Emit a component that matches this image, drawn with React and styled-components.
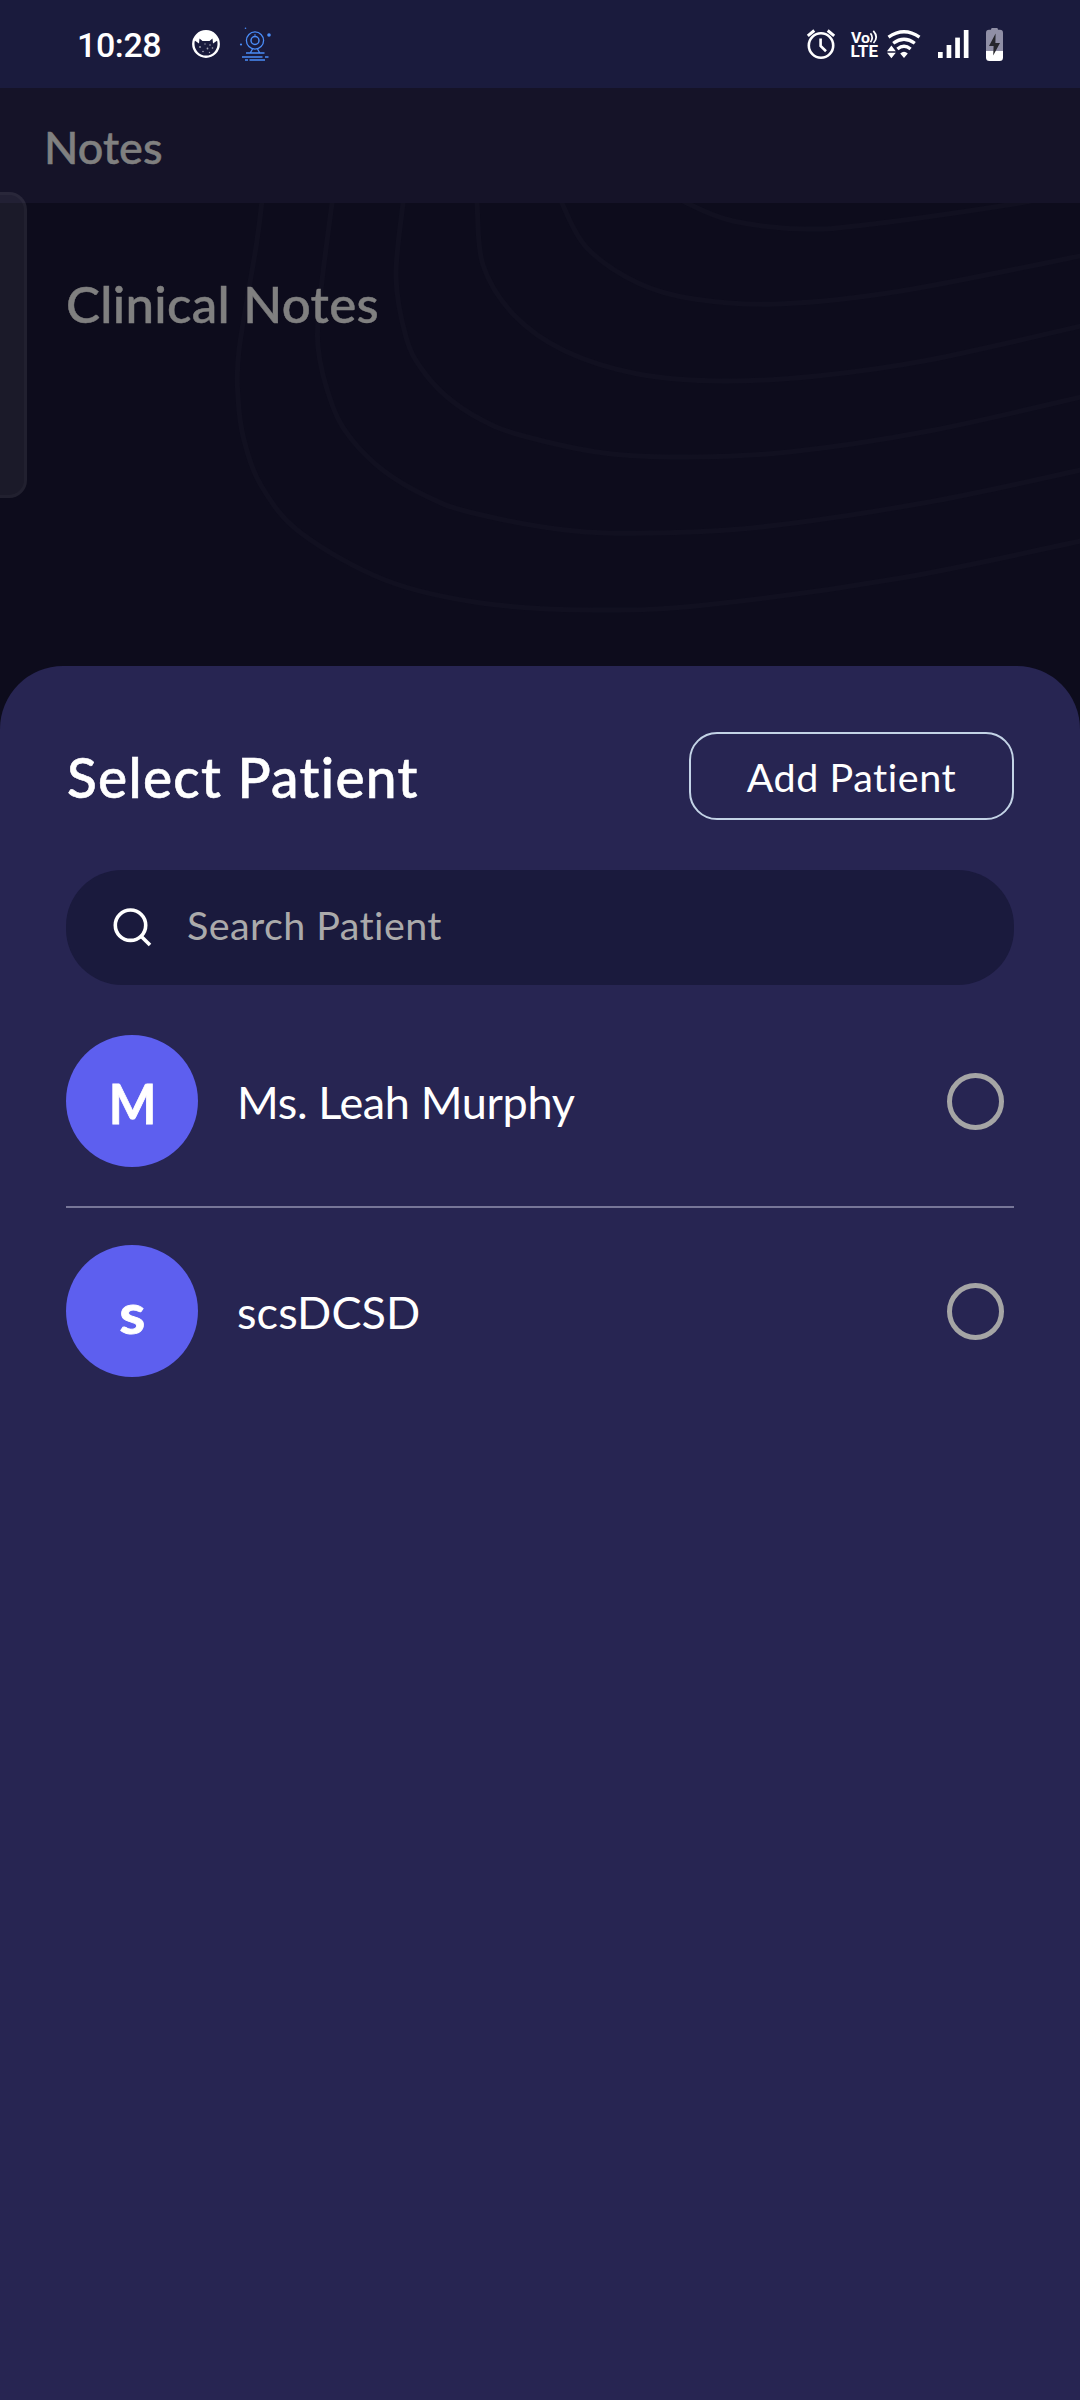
import React from 'react';
import styled, { createGlobalStyle } from 'styled-components';

const Global = createGlobalStyle`
  * { box-sizing: border-box; }
  body { margin: 0; background: #0d0c1c; }
`;

const Screen = styled.div`
  display: flex;
  flex-direction: column;
  position: relative;
  width: 1080px;
  height: 2400px;
  overflow: hidden;
  background: #0d0c1c;
  color: #fff;
  font-family: Lato, 'Open Sans', sans-serif;
`;

const StatusBar = styled.header`
  display: flex;
  justify-content: space-between;
  align-items: center;
  height: 88px;
  flex: none;
  padding: 0 77px;
  background: #1a1b3d;
`;

const StatusGroup = styled.div`
  display: flex;
  align-items: center;
  gap: ${(p) => p.$gap}px;
`;

const Clock = styled.span`
  width: 90px;
  padding-top: 2px;
  font: 500 34px/40px Roboto, sans-serif;
  letter-spacing: -0.4px;
`;

const Glyph = styled.svg`
  display: block;
  flex: none;
  overflow: visible;
`;

const AppBar = styled.div`
  display: flex;
  align-items: center;
  flex: none;
  height: 115px;
  padding: 2px 0 0 44px;
  background: #151328;
  color: #808080;
  font-size: 45px;
  font-weight: 500;
  line-height: 54px;
  -webkit-text-stroke: 0.5px #808080;
`;

const Body = styled.main`
  position: relative;
  flex: none;
  height: 463px;
  padding: 70px 66px 0;
`;

const Contours = styled.svg`
  position: absolute;
  inset: 0;
`;

const SectionTitle = styled.h2`
  position: relative;
  margin: 0;
  color: #808080;
  font-size: 51px;
  font-weight: 500;
  line-height: 62px;
  letter-spacing: 0.3px;
  -webkit-text-stroke: 0.5px #808080;
`;

const EdgeHandle = styled.div`
  position: absolute;
  left: -24px;
  top: 192px;
  width: 51px;
  height: 306px;
  border: 3px solid rgba(255, 255, 255, 0.03);
  border-radius: 18px;
  background: rgba(255, 255, 255, 0.06);
`;

const Sheet = styled.section`
  display: flex;
  flex-direction: column;
  flex: 1;
  padding: 66px 66px 0;
  border-radius: 63px 63px 0 0;
  background: #272552;
`;

const SheetHeader = styled.div`
  display: flex;
  align-items: center;
  justify-content: space-between;
  height: 88px;
`;

const SheetTitle = styled.h1`
  margin: 0;
  padding: 1px 0 0 1px;
  font-size: 55px;
  font-weight: 500;
  line-height: 66px;
  letter-spacing: 1.3px;
  -webkit-text-stroke: 0.6px #fff;
`;

const AddButton = styled.button`
  width: 325px;
  height: 88px;
  padding: 1px 0 0;
  border: 2.5px solid #c3d3e6;
  border-radius: 28px;
  background: transparent;
  color: #fff;
  font: 400 39.5px/48px Lato, sans-serif;
  letter-spacing: 0.55px;
`;

const SearchField = styled.label`
  display: flex;
  align-items: center;
  gap: 34px;
  height: 115px;
  margin-top: 50px;
  padding-left: 47px;
  border-radius: 56px;
  background: #1a1a3d;
`;

const Placeholder = styled.span`
  padding-bottom: 5px;
  color: #abaaab;
  font-size: 39.5px;
  line-height: 48px;
  letter-spacing: 0.4px;
`;

const List = styled.ul`
  margin: 50px 0 0;
  padding: 0;
  list-style: none;
`;

const PatientRow = styled.li`
  display: flex;
  align-items: center;
  padding-right: 10px;

  & + & {
    margin-top: 39px;
    padding-top: 37px;
    border-top: 2px solid #777698;
  }
`;

const Avatar = styled.span`
  display: flex;
  align-items: center;
  justify-content: center;
  width: 132px;
  height: 132px;
  border-radius: 50%;
  background: #5d5fef;
  font-size: 56px;
  font-weight: 700;
  line-height: 68px;
`;

const Initial = styled.span`
  padding-top: 3px;
  transform: scaleX(${(p) => p.$stretch});
  -webkit-text-stroke: 0.8px #fff;
`;

const PatientName = styled.span`
  flex: 1;
  margin-left: 39px;
  padding-top: 2px;
  font-size: 45px;
  line-height: 54px;
  letter-spacing: ${(p) => p.$tracking}px;
`;

const Radio = styled.span`
  width: 57px;
  height: 57px;
  border: 5px solid #a5a5a5;
  border-radius: 50%;
`;

const contourPoints = [
  [[262, 190], [261.7, 203], [256, 247], [239, 350], [238, 397], [244, 440], [262, 487], [301, 533], [385, 580], [481, 603], [593, 610], [705, 605], [901, 578], [1090, 539]],
  [[333, 190], [332, 203], [321, 290], [318, 347], [333, 407], [353, 441], [384, 471], [424, 495], [469, 512], [565, 530], [649, 533], [761, 527], [929, 502], [1090, 468]],
  [[404, 190], [403, 203], [396, 277], [406, 337], [421, 368], [446, 396], [480, 419], [520, 435], [604, 453], [688, 457], [789, 452], [929, 431], [1090, 395]],
  [[476, 190], [477, 203], [483, 265], [514, 315], [565, 351], [638, 374], [722, 381], [817, 376], [929, 360], [1090, 324]],
  [[560, 190], [562, 203], [587, 248], [638, 283], [694, 299], [778, 304], [901, 291], [1090, 254]],
  [[670, 190], [687, 203], [733, 221], [806, 229], [873, 224], [1014, 204], [1040, 198]],
];

const smooth = (pts) =>
  pts.slice(0, -1).reduce((d, p, i) => {
    const a = pts[i - 1] || p;
    const n = pts[i + 1];
    const b = pts[i + 2] || n;
    const c1 = [p[0] + (n[0] - a[0]) / 6, p[1] + (n[1] - a[1]) / 6];
    const c2 = [n[0] - (b[0] - p[0]) / 6, n[1] - (b[1] - p[1]) / 6];
    return `${d} C${c1} ${c2} ${n}`;
  }, `M${pts[0]}`);

const CatIcon = () => (
  <Glyph width="28" height="28" viewBox="0 0 28 28">
    <circle cx="14" cy="14" r="12.7" fill="none" stroke="#fff" strokeWidth="2.4" />
    <path d="M2 10 Q5 1 14 1 Q23 1 26 10 L21 13.5 L20.5 8.5 L17.5 11 H10.5 L7.5 8.5 L7 13.5 Z" fill="#fff" />
    <g fill="#fff" opacity="0.6">
      <circle cx="8" cy="17" r="0.9" /><circle cx="13" cy="14" r="0.7" />
      <circle cx="18" cy="15" r="0.8" /><circle cx="15.5" cy="18.5" r="0.9" />
      <circle cx="20.5" cy="18" r="0.8" /><circle cx="11" cy="21.5" r="0.8" />
      <circle cx="17.5" cy="22.5" r="0.7" />
    </g>
  </Glyph>
);

const WebcamIcon = () => (
  <Glyph width="32" height="34" viewBox="0 0 32 34">
    <g fill="none" stroke="#4a8df8" strokeWidth="1.3">
      <circle cx="15" cy="13.5" r="8.6" />
      <circle cx="15" cy="13.5" r="4" strokeWidth="1.5" />
      <path d="M12.5 22 L10.5 25.5 M17.5 22 L19.5 25.5 M6 26 H24.5 M2 30 H22.5 M25 30 H28.5 M5 33 H8 M9.5 33 H25" />
    </g>
    <circle cx="29" cy="8" r="1.8" fill="#4a8df8" />
    <circle cx="5.5" cy="1.2" r="0.8" fill="#4a8df8" />
    <circle cx="1" cy="17.5" r="1.1" fill="#4a8df8" />
    <circle cx="15" cy="8" r="0.8" fill="#4a8df8" />
  </Glyph>
);

const AlarmIcon = () => (
  <Glyph width="28" height="30" viewBox="0 0 28 30">
    <g fill="none" stroke="#fff" strokeWidth="2.6">
      <circle cx="14" cy="16.5" r="12.2" />
      <path d="M13.6 9.5 V17 L19 22.3" />
      <path d="M0.8 6.8 L7.3 1.5 M27.2 6.8 L20.7 1.5" strokeWidth="3" />
    </g>
  </Glyph>
);

const VolteIcon = () => (
  <Glyph width="27" height="28" viewBox="0 0 27 28" fill="#fff" fontFamily="Roboto, sans-serif" fontWeight="700">
    <text x="0" y="12.5" fontSize="15" textLength="19" lengthAdjust="spacingAndGlyphs">Vo</text>
    <text x="-0.5" y="27.4" fontSize="16.5" textLength="27.5" lengthAdjust="spacingAndGlyphs">LTE</text>
    <path d="M19.5 3.2 Q22.8 7.5 19.5 12.2 M22.3 0.8 Q28 7 22.5 13" fill="none" stroke="#fff" strokeWidth="1.7" />
  </Glyph>
);

const WifiIcon = () => (
  <Glyph width="34" height="28" viewBox="0 0 34 28">
    <g fill="none" stroke="#fff" strokeWidth="3.3">
      <path d="M1.5 7.2 Q17 -3.6 32.5 7.2" />
      <path d="M6.2 13.3 Q17 5.2 27.8 13.3" />
      <path d="M10.4 19 Q17 13.6 23.6 19" />
    </g>
    <path d="M13.2 23.5 Q17 20.2 20.8 23.5 L17 28 Z M0 21.2 L4.4 15.5 L8.8 21.2 Z M0 22.8 H8.8 L4.4 28.3 Z" fill="#fff" />
  </Glyph>
);

const SignalIcon = () => (
  <Glyph width="31" height="28" viewBox="0 0 31 28" fill="#fff">
    <rect x="0" y="22" width="4.7" height="6" />
    <rect x="8.6" y="15" width="4.7" height="13" />
    <rect x="17.2" y="7.6" width="4.7" height="20.4" />
    <rect x="25.8" y="0" width="4.7" height="28" />
  </Glyph>
);

const BatteryIcon = () => (
  <Glyph width="17" height="33" viewBox="0 0 17 33">
    <path d="M6 0 H11 Q12 0 12 1.8 H14 Q17 1.8 17 5 V23 H0 V5 Q0 1.8 3 1.8 H5 Q5 0 6 0 Z" fill="#908fa6" />
    <path d="M0 23 H17 V29.5 Q17 33 13.5 33 H3.5 Q0 33 0 29.5 Z" fill="#fff" />
    <path d="M9.6 5.5 L3 18 H7.6 L7.2 27.5 L14 15 H9.4 Z" fill="#26262c" />
  </Glyph>
);

const SearchIcon = () => (
  <Glyph width="40" height="40" viewBox="0 0 40 40" fill="none" stroke="#fff" strokeWidth="3.6">
    <circle cx="17.5" cy="17.2" r="15.2" />
    <path d="M28.1 28.2 L37 37.1" strokeLinecap="butt" />
  </Glyph>
);

const patients = [
  { name: 'Ms. Leah Murphy', initial: 'M', stretch: 0.9, tracking: -0.35 },
  { name: 'scsDCSD', initial: 's', stretch: 1.06, tracking: 0.1 },
];

export default function App() {
  return (
    <Screen>
      <Global />
      <StatusBar>
        <StatusGroup $gap={25}>
          <Clock>10:28</Clock>
          <StatusGroup $gap={20}>
            <CatIcon />
            <WebcamIcon />
          </StatusGroup>
        </StatusGroup>
        <StatusGroup $gap={17}>
          <StatusGroup $gap={16}>
            <AlarmIcon />
            <StatusGroup $gap={9}>
              <VolteIcon />
              <WifiIcon />
            </StatusGroup>
          </StatusGroup>
          <SignalIcon />
          <BatteryIcon />
        </StatusGroup>
      </StatusBar>
      <AppBar>Notes</AppBar>
      <Body>
        <Contours width="1080" height="463" viewBox="0 203 1080 463" fill="none" stroke="#111020" strokeWidth="5">
          {contourPoints.map((pts, i) => (
            <path key={i} d={smooth(pts)} />
          ))}
        </Contours>
        <SectionTitle>Clinical Notes</SectionTitle>
      </Body>
      <EdgeHandle />
      <Sheet>
        <SheetHeader>
          <SheetTitle>Select Patient</SheetTitle>
          <AddButton>Add Patient</AddButton>
        </SheetHeader>
        <SearchField>
          <SearchIcon />
          <Placeholder>Search Patient</Placeholder>
        </SearchField>
        <List>
          {patients.map((p) => (
            <PatientRow key={p.name}>
              <Avatar>
                <Initial $stretch={p.stretch}>{p.initial}</Initial>
              </Avatar>
              <PatientName $tracking={p.tracking}>{p.name}</PatientName>
              <Radio />
            </PatientRow>
          ))}
        </List>
      </Sheet>
    </Screen>
  );
}
